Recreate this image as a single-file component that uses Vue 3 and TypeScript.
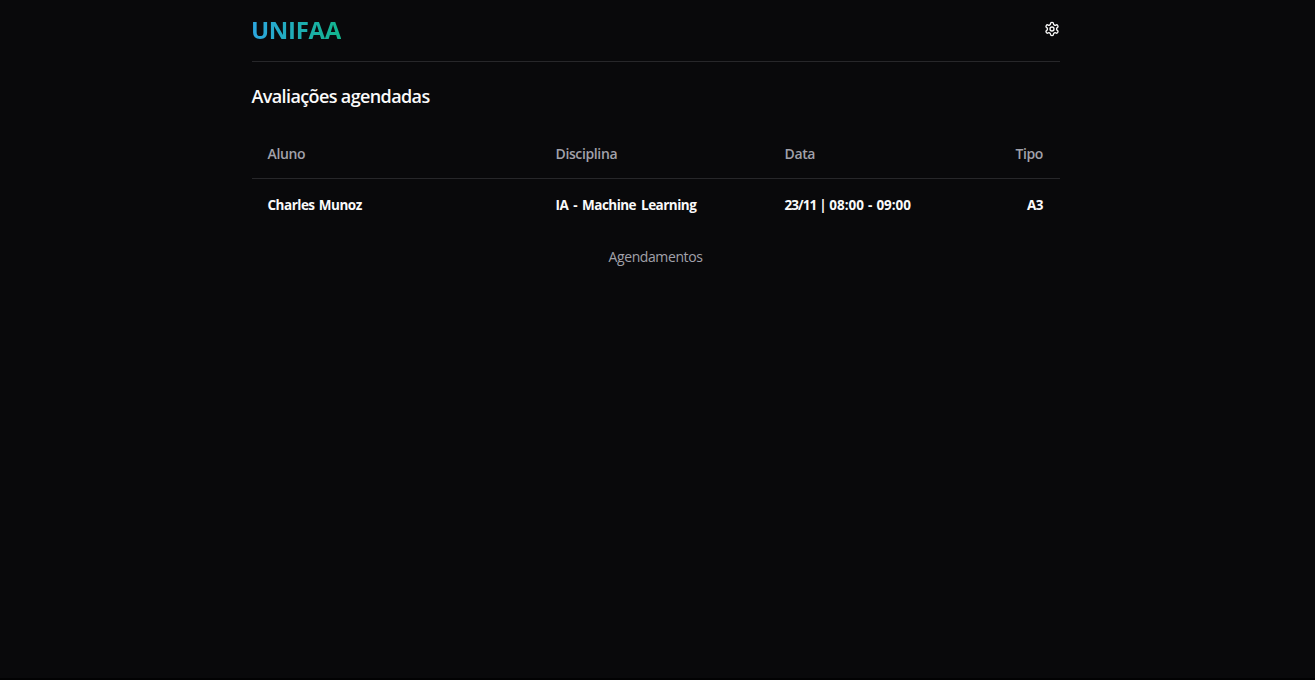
<script setup lang="ts">
interface Booking {
  student: string
  subject: string
  day: string
  time: string
  kind: string
}

const bookings: Booking[] = [
  { student: 'Charles Munoz', subject: 'IA - Machine Learning', day: '23/11', time: '08:00 - 09:00', kind: 'A3' },
]
</script>

<template>
  <div class="page">
    <div class="container">
      <header class="topbar">
        <span class="brand">UNIFAA</span>
        <button class="settings" type="button" aria-label="Configurações">
          <svg width="16" height="16" viewBox="0 0 24 24" fill="none" stroke="currentColor" stroke-width="2" stroke-linecap="round" stroke-linejoin="round">
            <path d="M12.22 2h-.44a2 2 0 0 0-2 2v.18a2 2 0 0 1-1 1.73l-.43.25a2 2 0 0 1-2 0l-.15-.08a2 2 0 0 0-2.73.73l-.22.38a2 2 0 0 0 .73 2.73l.15.1a2 2 0 0 1 1 1.72v.51a2 2 0 0 1-1 1.74l-.15.09a2 2 0 0 0-.73 2.73l.22.38a2 2 0 0 0 2.73.73l.15-.08a2 2 0 0 1 2 0l.43.25a2 2 0 0 1 1 1.73V20a2 2 0 0 0 2 2h.44a2 2 0 0 0 2-2v-.18a2 2 0 0 1 1-1.73l.43-.25a2 2 0 0 1 2 0l.15.08a2 2 0 0 0 2.73-.73l.22-.39a2 2 0 0 0-.73-2.73l-.15-.08a2 2 0 0 1-1-1.74v-.5a2 2 0 0 1 1-1.74l.15-.09a2 2 0 0 0 .73-2.73l-.22-.38a2 2 0 0 0-2.73-.73l-.15.08a2 2 0 0 1-2 0l-.43-.25a2 2 0 0 1-1-1.73V4a2 2 0 0 0-2-2z" />
            <circle cx="12" cy="12" r="3" />
          </svg>
        </button>
      </header>
      <h1 class="title">Avaliações agendadas</h1>
      <div class="row head">
        <span>Aluno</span>
        <span>Disciplina</span>
        <span>Data</span>
        <span class="end">Tipo</span>
      </div>
      <div v-for="b in bookings" :key="b.student" class="row body">
        <span>{{ b.student }}</span>
        <span class="subject">{{ b.subject }}</span>
        <span><span class="day">{{ b.day }}</span><span class="bar"> | </span><span class="time">{{ b.time }}</span></span>
        <span class="end">{{ b.kind }}</span>
      </div>
      <p class="caption">Agendamentos</p>
    </div>
  </div>
</template>

<style>
body {
  background: #09090b;
}
</style>

<style scoped>
.page {
  box-sizing: border-box;
  height: 680px;
  overflow: hidden;
  background: #09090b;
  border-bottom: 2px solid #020203;
  color: #fafafa;
  font-family: "Open Sans", "Noto Sans", sans-serif;
}
.container {
  width: 808px;
  margin-left: 252px;
}
.topbar {
  box-sizing: border-box;
  height: 62px;
  display: flex;
  justify-content: space-between;
  align-items: center;
  border-bottom: 1px solid #27272a;
}
.brand {
  margin: 0 0 2px -1px;
  font-size: 24px;
  line-height: 32px;
  font-weight: 670;
  letter-spacing: -0.3px;
  background: linear-gradient(to right, #2ca6e0, #12b48c);
  background-clip: text;
  -webkit-background-clip: text;
  color: transparent;
}
.settings {
  display: flex;
  margin: 0 0 3px;
  padding: 0;
  border: 0;
  background: none;
  color: #fafafa;
}
.title {
  margin: 20px 0 0 -0.5px;
  font-size: 18px;
  line-height: 28px;
  font-weight: 620;
  letter-spacing: -0.62px;
}
.row {
  display: grid;
  grid-template-columns: 288px 229px 1fr auto;
  box-sizing: border-box;
  padding: 0 17px 2px 15.5px;
  align-items: center;
  font-size: 14px;
  white-space: nowrap;
}
.head {
  margin-top: 20px;
  height: 49px;
  border-bottom: 1px solid #27272a;
  color: #a1a1aa;
  font-weight: 600;
  letter-spacing: -0.37px;
}
.body {
  height: 52px;
  padding-bottom: 0;
  font-size: 13.5px;
  font-weight: 680;
  letter-spacing: -0.5px;
  word-spacing: 1.3px;
}
.subject {
  letter-spacing: -0.52px;
  word-spacing: 2px;
}
.day {
  letter-spacing: -0.95px;
}
.bar {
  letter-spacing: -0.5px;
  word-spacing: 0.1px;
}
.time {
  letter-spacing: -0.05px;
  word-spacing: 0.7px;
}
.end {
  text-align: right;
}
.caption {
  margin: 16px 0 0 -1px;
  text-align: center;
  font-size: 14px;
  line-height: 20px;
  letter-spacing: -0.4px;
  color: #a1a1aa;
}
</style>
